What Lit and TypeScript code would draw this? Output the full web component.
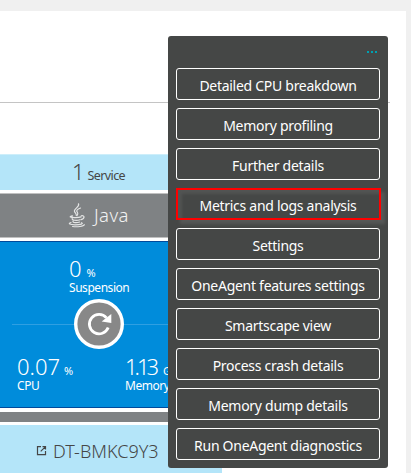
import { LitElement, html, css, svg } from "lit";
import { customElement, property } from "lit/decorators.js";

const ACTIONS = [
  "Detailed CPU breakdown",
  "Memory profiling",
  "Further details",
  "Metrics and logs analysis",
  "Settings",
  "OneAgent features settings",
  "Smartscape view",
  "Process crash details",
  "Memory dump details",
  "Run OneAgent diagnostics",
];

@customElement("action-menu")
class ActionMenu extends LitElement {
  @property() highlighted = "";

  static styles = css`
    :host {
      display: flex;
      flex-direction: column;
      gap: 8px;
      box-sizing: border-box;
      width: 220px;
      height: 432px;
      padding: 0 8px 8px;
      border-radius: 3px;
      background: #454746;
    }
    .more {
      display: flex;
      justify-content: flex-end;
      align-items: center;
      gap: 2px;
      height: 24px;
      padding: 8px 3px 0 0;
      box-sizing: border-box;
    }
    .more i {
      width: 2px;
      height: 2px;
      background: #00a1b2;
    }
    button {
      flex: none;
      height: 32px;
      box-sizing: border-box;
      padding: 3px 0 0;
      border: 1px solid #fff;
      border-radius: 3px;
      background: none;
      color: #fff;
      font: 14px/20px "Noto Sans", sans-serif;
      letter-spacing: -0.28px;
      white-space: nowrap;
    }
    .marked {
      margin-right: -1px;
      border: 2px solid #f00;
      border-radius: 0;
      padding-right: 1px;
      box-shadow: 4px 4px 3px #565857, inset 4px 4px 3px #525453;
    }
  `;

  render() {
    return html`
      <div class="more"><i></i><i></i><i></i></div>
      ${ACTIONS.map(
        (a) => html`<button class=${a === this.highlighted ? "marked" : ""}>${a}</button>`
      )}
    `;
  }
}

const javaIcon = svg`
  <g fill="none" stroke="#e4e5e5" stroke-width="1.2" stroke-linecap="round">
    <path d="M10.500 0.800C12 4 5.500 5.500 6.500 8.500C7 10 8.500 10.500 8.300 12.500"/>
    <path d="M12.500 5C8.500 6.500 8 8 9.500 9.500C10.300 10.800 9.800 11.600 9 12.600"/>
    <path d="M4.500 12.800C0.500 13.600 2 14.700 7.500 14.600C10 14.600 12 14.300 13 13.900"/>
    <path d="M13.300 12.800C17 12 17 15.600 13 16.700"/>
    <path d="M4.200 15.500C3.500 17.600 9 17.700 12 16.800"/>
    <path d="M5 18.200C4.500 19.900 9 20 11.600 19"/>
    <path d="M3 19.500C-0.500 20.500 2 21.900 7.500 21.800C12.500 21.800 16 20.700 13.600 19.700"/>
    <path d="M4.500 23.500C9.500 24.200 15.500 23.400 16.300 21.700"/>
  </g>`;

@customElement("app-root")
class AppRoot extends LitElement {
  static styles = css`
    :host {
      display: block;
      position: relative;
      box-sizing: border-box;
      width: 411px;
      height: 473px;
      padding: 11px 5px 0 0;
      overflow: hidden;
      background: #f0f0f0;
      font-family: "Noto Sans", sans-serif;
    }
    .card {
      height: 462px;
      background: #fff;
      overflow: hidden;
    }
    .rule {
      height: 1px;
      width: 390px;
      margin-top: 91px;
      background: #c4c4c4;
    }
    .stack {
      width: 222px;
      margin-top: 51px;
      white-space: nowrap;
    }
    .stack > div {
      box-sizing: border-box;
    }
    .services {
      display: flex;
      align-items: baseline;
      gap: 3px;
      height: 36px;
      padding: 0 0 0 72px;
      border-top: 1px solid #cdeefa;
      background: #b4e5f9;
      color: #454646;
      line-height: 33px;
    }
    .num {
      font-size: 22px;
      font-weight: 300;
    }
    .tight {
      letter-spacing: -3px;
      margin-right: 3px;
    }
    .services .label {
      font-size: 12.5px;
      letter-spacing: -0.6px;
    }
    .tech {
      display: flex;
      align-items: center;
      gap: 9px;
      height: 45px;
      margin-top: 3px;
      padding: 0 0 0 68px;
      border-top: 1px solid #c0c0c0;
      border-bottom: 1px solid #c0c0c0;
      background: #7f8284;
      color: #f2f2f2;
      font-size: 18.5px;
      font-weight: 300;
      letter-spacing: 0.4px;
    }
    .tech span {
      padding-bottom: 3px;
    }
    .process {
      display: flex;
      flex-direction: column;
      height: 167px;
      margin-top: 3px;
      border-top: 1px solid #004a9c;
      border-bottom: 1px solid #004a9c;
      background: #008cdb;
      color: #fff;
    }
    .metric {
      display: grid;
      grid-template-rows: 23px 15px;
      width: 84px;
    }
    .value {
      display: flex;
      align-items: baseline;
      gap: 4px;
      line-height: 23px;
    }
    .unit {
      font-size: 11px;
    }
    .name {
      font-size: 12px;
      line-height: 16px;
      letter-spacing: -0.45px;
    }
    .suspension {
      margin: 15px 0 0 69px;
    }
    .suspension .value {
      gap: 5px;
    }
    .divider {
      display: flex;
      align-items: center;
      height: 50px;
      margin-top: 4px;
    }
    .divider::before {
      content: "";
      width: 62px;
      margin-left: 12px;
      height: 1px;
      background: #2f9fe2;
    }
    .divider::after {
      content: "";
      flex: 1;
      height: 1px;
      background: #2f9fe2;
    }
    .usage {
      display: flex;
      gap: 24px;
      margin: 6px 0 0 17px;
    }
    .group {
      height: 10px;
      margin-top: 4px;
      background: #7f8284;
    }
    .host {
      display: flex;
      align-items: center;
      gap: 6px;
      height: 48px;
      margin-top: 3px;
      padding: 3px 0 0 36px;
      background: #b4e5f9;
      color: #454646;
      font-size: 18px;
      font-weight: 300;
    }
    svg {
      display: block;
      flex: none;
    }
    action-menu {
      position: absolute;
      left: 168px;
      top: 36px;
    }
  `;

  render() {
    return html`
      <div class="card">
        <div class="rule"></div>
        <div class="stack">
          <div class="services"><span class="num">1</span><span class="label">Service</span></div>
          <div class="tech">
            <svg width="17" height="25" viewBox="0 0 17 25">${javaIcon}</svg>
            <span>Java</span>
          </div>
          <div class="process">
            <div class="metric suspension">
              <div class="value"><span class="num">0</span><span class="unit">%</span></div>
              <div class="name">Suspension</div>
            </div>
            <div class="divider">
              <svg width="50" height="50" viewBox="0 0 50 50">
                <circle cx="25" cy="25" r="23.300" fill="#888" stroke="#fff" stroke-width="3.400" />
                <path d="M34.200 28.500A9.700 9.700 0 1 1 32.500 18.800" fill="none" stroke="#fff" stroke-width="2.800" />
                <path d="M37.300 15V24L27.700 22.600Z" fill="#fff" />
              </svg>
            </div>
            <div class="usage">
              <div class="metric">
                <div class="value"><span class="num">0.07</span><span class="unit">%</span></div>
                <div class="name">CPU</div>
              </div>
              <div class="metric">
                <div class="value"><span class="num tight">1.13</span><span class="unit">GB</span></div>
                <div class="name">Memory</div>
              </div>
            </div>
          </div>
          <div class="group"></div>
          <div class="host">
            <svg width="11" height="11" viewBox="0 0 11 11" fill="none" stroke="#454646" stroke-width="1.200">
              <path d="M5 1.600H1.500V9.600H9.500V6M6.500 1.600H9.500V4.600M9.300 1.800L4.700 6.400" />
            </svg>
            <span>DT-BMKC9Y3</span>
          </div>
        </div>
      </div>
      <action-menu highlighted="Metrics and logs analysis"></action-menu>
    `;
  }
}
